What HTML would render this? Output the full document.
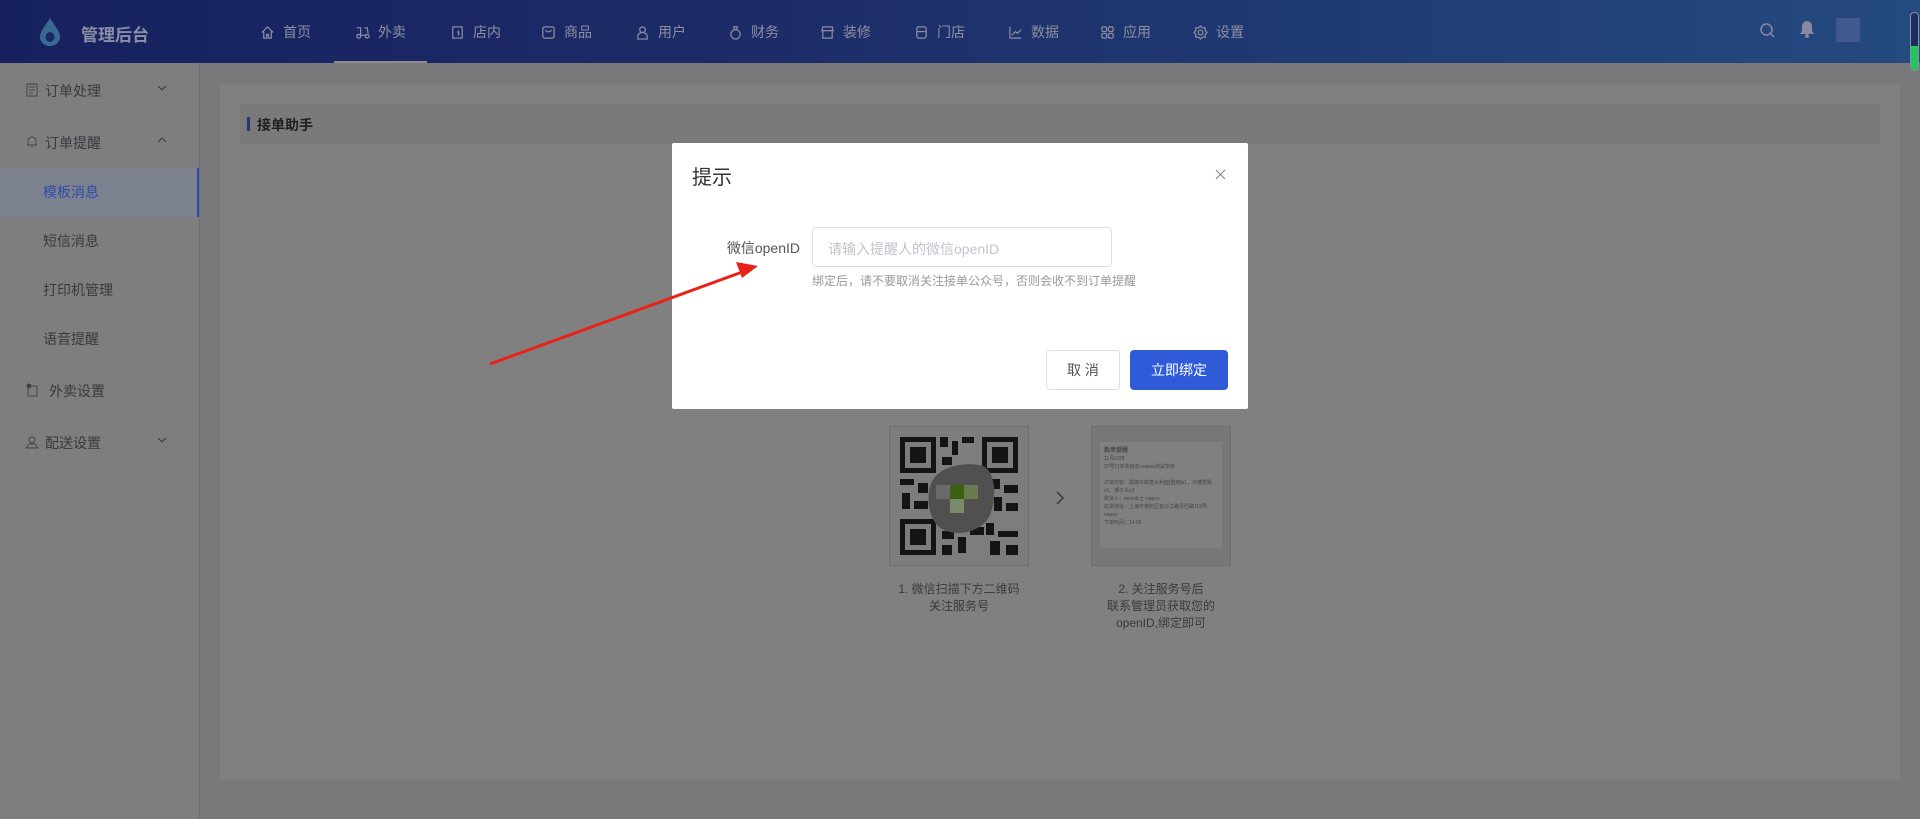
<!DOCTYPE html>
<html><head><meta charset="utf-8"><style>
*{margin:0;padding:0;box-sizing:border-box}
body{width:1920px;height:819px;overflow:hidden;background:#79797c;font-family:"Liberation Sans","Noto Sans CJK SC",sans-serif;position:relative}
.hdr{position:absolute;left:0;top:0;width:1920px;height:63px;background:linear-gradient(90deg,#172160,#1d2c68 40%,#244a80)}
.logo{position:absolute;left:38px;top:17px}
.lt{position:absolute;left:81px;top:21px;color:#8a8fa6;font-size:17px;font-weight:bold}
.nav{position:absolute;top:22px;color:#8c8fa0;font-size:14px;display:flex;align-items:center;gap:8px}
.nav svg{width:15px;height:15px}
.ul{position:absolute;left:334px;top:61px;width:93px;height:2px;background:#8a8a92}
.side{position:absolute;left:0;top:63px;width:200px;height:756px;background:#7e7e7f;border-right:1px solid #6f7178}
.si{position:absolute;left:0;width:200px;height:20px;font-size:14px;color:#3a3a3e}
.si .ic{position:absolute;left:25px;top:2px;width:14px;height:14px}
.si .t{position:absolute;left:45px;top:0}
.si .ch{position:absolute;left:157px;top:3px}
.card{position:absolute;left:220px;top:84px;width:1680px;height:696px;background:#808080;border-radius:4px}
.bar{position:absolute;left:240px;top:104px;width:1640px;height:40px;background:#7a7a7a}
.bar b{position:absolute;left:7px;top:13px;width:3px;height:14px;background:#24367a}
.bar span{position:absolute;left:17px;top:11px;font-size:14px;font-weight:bold;color:#1e1e1e}
.qr{position:absolute;top:426px;width:140px;height:140px;border:1px solid #6e6e6e;background:#7d7d7d}
.cap{position:absolute;top:581px;width:200px;text-align:center;font-size:12px;line-height:17px;color:#3a3a3a}
.modal{position:absolute;left:672px;top:143px;width:576px;height:266px;background:#fff;border-radius:2px}
</style></head><body>
<div class="hdr">
<svg class="logo" width="24" height="30" viewBox="0 0 24 30"><path d="M12 1C8 8 2 14 2 20a10 9 0 0 0 20 0C22 14 16 8 12 1z" fill="#3a6a94"/><ellipse cx="12" cy="20" rx="4.5" ry="5" fill="#1a2a66"/></svg>
<div class="lt">管理后台</div>
<div class="nav" style="left:260px"><svg viewBox="0 0 16 16" fill="none" stroke="#8c8fa0" stroke-width="1.3"><path d="M2 8L8 2l6 6M4 7v7h3v-4h2v4h3V7"/></svg>首页</div>
<div class="nav" style="left:355px"><svg viewBox="0 0 16 16" fill="none" stroke="#8c8fa0" stroke-width="1.3"><path d="M2 3h4v8M6 11h6M10 3h3l1 6"/><circle cx="4" cy="12" r="2"/><circle cx="13" cy="12" r="2"/></svg>外卖</div>
<div class="nav" style="left:450px"><svg viewBox="0 0 16 16" fill="none" stroke="#8c8fa0" stroke-width="1.3"><rect x="3" y="2" width="10" height="12"/><path d="M8 7l2 3M9 6v5"/></svg>店内</div>
<div class="nav" style="left:541px"><svg viewBox="0 0 16 16" fill="none" stroke="#8c8fa0" stroke-width="1.3"><rect x="2" y="2" width="12" height="12" rx="2"/><path d="M5 5c0 3 6 3 6 0"/></svg>商品</div>
<div class="nav" style="left:635px"><svg viewBox="0 0 16 16" fill="none" stroke="#8c8fa0" stroke-width="1.3"><circle cx="8" cy="5" r="3"/><path d="M3 15v-3a5 4 0 0 1 10 0v3z"/></svg>用户</div>
<div class="nav" style="left:728px"><svg viewBox="0 0 16 16" fill="none" stroke="#8c8fa0" stroke-width="1.3"><circle cx="8" cy="10" r="5"/><path d="M6 2h4l-1 3H7z"/></svg>财务</div>
<div class="nav" style="left:820px"><svg viewBox="0 0 16 16" fill="none" stroke="#8c8fa0" stroke-width="1.3"><path d="M2 6l1-4h10l1 4zM3 6v8h10V6"/></svg>装修</div>
<div class="nav" style="left:914px"><svg viewBox="0 0 16 16" fill="none" stroke="#8c8fa0" stroke-width="1.3"><rect x="3" y="2" width="10" height="12" rx="2"/><path d="M3 7h10"/></svg>门店</div>
<div class="nav" style="left:1008px"><svg viewBox="0 0 16 16" fill="none" stroke="#8c8fa0" stroke-width="1.3"><path d="M2 2v12h12M4 11l4-4 2 2 4-4"/></svg>数据</div>
<div class="nav" style="left:1100px"><svg viewBox="0 0 16 16" fill="none" stroke="#8c8fa0" stroke-width="1.3"><rect x="2" y="2" width="5" height="5" rx="1.5"/><rect x="9" y="2" width="5" height="5" rx="1.5"/><rect x="2" y="9" width="5" height="5" rx="1.5"/><rect x="9" y="9" width="5" height="5" rx="1.5"/></svg>应用</div>
<div class="nav" style="left:1193px"><svg viewBox="0 0 16 16" fill="none" stroke="#8c8fa0" stroke-width="1.3"><circle cx="8" cy="8" r="2.5"/><path d="M8 1l2 2h3v3l2 2-2 2v3h-3l-2 2-2-2H3v-3L1 8l2-2V3h3z"/></svg>设置</div>
<div class="ul"></div>
<svg style="position:absolute;left:1759px;top:22px" width="17" height="17" viewBox="0 0 17 17" fill="none" stroke="#858aa0" stroke-width="1.5"><circle cx="7.5" cy="7.5" r="5.5"/><path d="M11.5 11.5l3.5 3.5"/></svg>
<svg style="position:absolute;left:1799px;top:20px" width="16" height="18" viewBox="0 0 16 18"><path d="M8 1a5 5 0 0 0-5 5v5l-2 3h14l-2-3V6a5 5 0 0 0-5-5z" fill="#858aa0"/><circle cx="8" cy="16" r="2" fill="#858aa0"/></svg>
<div style="position:absolute;left:1836px;top:18px;width:24px;height:24px;background:#4a5e94;opacity:.8"></div>
<div style="position:absolute;left:1910px;top:12px;width:9px;height:59px;border:1px solid #8a90a0;border-radius:4px;background:#1b2d5c;overflow:hidden"><div style="position:absolute;bottom:0;left:0;width:7px;height:24px;background:#22c55e"></div></div>
</div>
<div class="side">
<div style="position:absolute;left:0;top:105px;width:199px;height:49px;background:#7c8290;border-right:2px solid #2d4aa8"></div>
<div class="si" style="top:18px"><svg class="ic" viewBox="0 0 14 14" fill="none" stroke="#454548"><rect x="2" y="1" width="10" height="12"/><path d="M4 4h6M4 7h6M4 10h4"/></svg><span class="t">订单处理</span><svg class="ch" width="10" height="8"><path d="M1 2l4 4 4-4" stroke="#3a3a3e" fill="none"/></svg></div>
<div class="si" style="top:70px"><svg class="ic" viewBox="0 0 14 14" fill="none" stroke="#454548"><path d="M3 10V6a4 4 0 0 1 8 0v4H2h10M6 12h2"/></svg><span class="t">订单提醒</span><svg class="ch" width="10" height="8"><path d="M1 6l4-4 4 4" stroke="#3a3a3e" fill="none"/></svg></div>
<div class="si" style="top:119px;color:#2f4da6"><span class="t" style="left:43px">模板消息</span></div>
<div class="si" style="top:168px"><span class="t" style="left:43px">短信消息</span></div>
<div class="si" style="top:217px"><span class="t" style="left:43px">打印机管理</span></div>
<div class="si" style="top:266px"><span class="t" style="left:43px">语音提醒</span></div>
<div class="si" style="top:318px"><svg class="ic" viewBox="0 0 14 14" fill="none" stroke="#454548"><rect x="3" y="3" width="9" height="10"/><circle cx="4" cy="3" r="2" fill="#454548"/></svg><span class="t" style="left:49px">外卖设置</span></div>
<div class="si" style="top:370px"><svg class="ic" viewBox="0 0 14 14" fill="none" stroke="#454548"><circle cx="7" cy="5" r="3"/><path d="M1 13l3-4h6l3 4z"/></svg><span class="t">配送设置</span><svg class="ch" width="10" height="8"><path d="M1 2l4 4 4-4" stroke="#3a3a3e" fill="none"/></svg></div>
</div>
<div class="card"></div>
<div class="bar"><b></b><span>接单助手</span></div>
<div class="qr" style="left:889px">
<svg width="138" height="138" viewBox="0 0 138 138">
<g fill="#141414">
<rect x="10" y="10" width="36" height="36"/><rect x="92" y="10" width="36" height="36"/><rect x="10" y="92" width="36" height="36"/>
</g>
<g fill="#7d7d7d"><rect x="15" y="15" width="26" height="26"/><rect x="97" y="15" width="26" height="26"/><rect x="15" y="97" width="26" height="26"/></g>
<g fill="#141414"><rect x="20" y="20" width="16" height="16"/><rect x="102" y="20" width="16" height="16"/><rect x="20" y="102" width="16" height="16"/>
<rect x="50" y="10" width="8" height="10"/><rect x="62" y="14" width="6" height="14"/><rect x="72" y="10" width="12" height="6"/><rect x="52" y="30" width="10" height="8"/><rect x="10" y="52" width="14" height="6"/><rect x="28" y="56" width="10" height="10"/><rect x="12" y="66" width="8" height="16"/><rect x="24" y="74" width="14" height="8"/><rect x="100" y="52" width="10" height="10"/><rect x="114" y="58" width="14" height="8"/><rect x="104" y="70" width="8" height="14"/><rect x="116" y="76" width="12" height="8"/><rect x="52" y="104" width="12" height="8"/><rect x="68" y="110" width="8" height="16"/><rect x="80" y="100" width="14" height="8"/><rect x="96" y="96" width="8" height="12"/><rect x="108" y="104" width="20" height="6"/><rect x="100" y="114" width="10" height="14"/><rect x="116" y="118" width="12" height="10"/><rect x="52" y="118" width="10" height="10"/></g>
<path d="M40 60c5-20 30-25 50-22 15 3 18 30 10 50-8 18-35 22-48 14C40 95 36 75 40 60z" fill="#505050"/>
<rect x="60" y="58" width="14" height="14" fill="#3a6010"/><rect x="74" y="58" width="14" height="14" fill="#6b7a50"/><rect x="60" y="72" width="14" height="14" fill="#7a8a6a"/><rect x="46" y="58" width="14" height="14" fill="#6a6a6a"/>
</svg></div>
<svg style="position:absolute;left:1055px;top:490px" width="10" height="16"><path d="M2 2l6 6-6 6" stroke="#3e3e3e" stroke-width="1.6" fill="none"/></svg>
<div class="qr" style="left:1091px;background:#777">
<div style="position:absolute;left:8px;top:15px;width:122px;height:106px;background:#808080;font-size:5px;line-height:8px;color:#444;padding:5px 4px">
<b style="font-size:6px">新单提醒</b><br>11月23日<br>37号订单未接单-napos测试专用<br><br>订单内容：黑椒牛柳意大利面[重牌]x1、冰糖雪梨x1、狮子头x1<br>收货人：miss女士-napos<br>收货地址：上海市普陀区金沙江路丹巴路119号-napos<br>下单时间：14:50</div></div>
<div class="cap" style="left:859px;top:581px">1. 微信扫描下方二维码<br>关注服务号</div>
<div class="cap" style="left:1061px">2. 关注服务号后<br>联系管理员获取您的<br>openID,绑定即可</div>
<div class="modal">
<div style="position:absolute;left:20px;top:18px;font-size:20px;color:#333">提示</div>
<svg style="position:absolute;left:543px;top:26px" width="11" height="11"><path d="M1 1l9 9M10 1l-9 9" stroke="#888" stroke-width="1.1"/></svg>
<div style="position:absolute;right:448px;top:95px;font-size:14px;color:#555">微信openID</div>
<div style="position:absolute;left:140px;top:84px;width:300px;height:40px;border:1px solid #dcdfe6;border-radius:4px;font-size:14px;color:#c0c4cc;padding:11px 15px">请输入提醒人的微信openID</div>
<div style="position:absolute;left:140px;top:129px;font-size:12px;color:#999">绑定后，请不要取消关注接单公众号，否则会收不到订单提醒</div>
<div style="position:absolute;left:374px;top:207px;width:74px;height:40px;border:1px solid #dcdfe6;border-radius:4px;font-size:14px;color:#555;text-align:center;line-height:38px">取 消</div>
<div style="position:absolute;left:458px;top:207px;width:98px;height:40px;background:#2f5bd8;border-radius:4px;font-size:14px;color:#fff;text-align:center;line-height:40px">立即绑定</div>
</div>
<svg style="position:absolute;left:0;top:0" width="1920" height="819"><line x1="490" y1="364" x2="745" y2="271" stroke="#e8221a" stroke-width="3"/><path d="M758 266l-22 -4 6 16z" fill="#e8221a"/></svg>
</body></html>
